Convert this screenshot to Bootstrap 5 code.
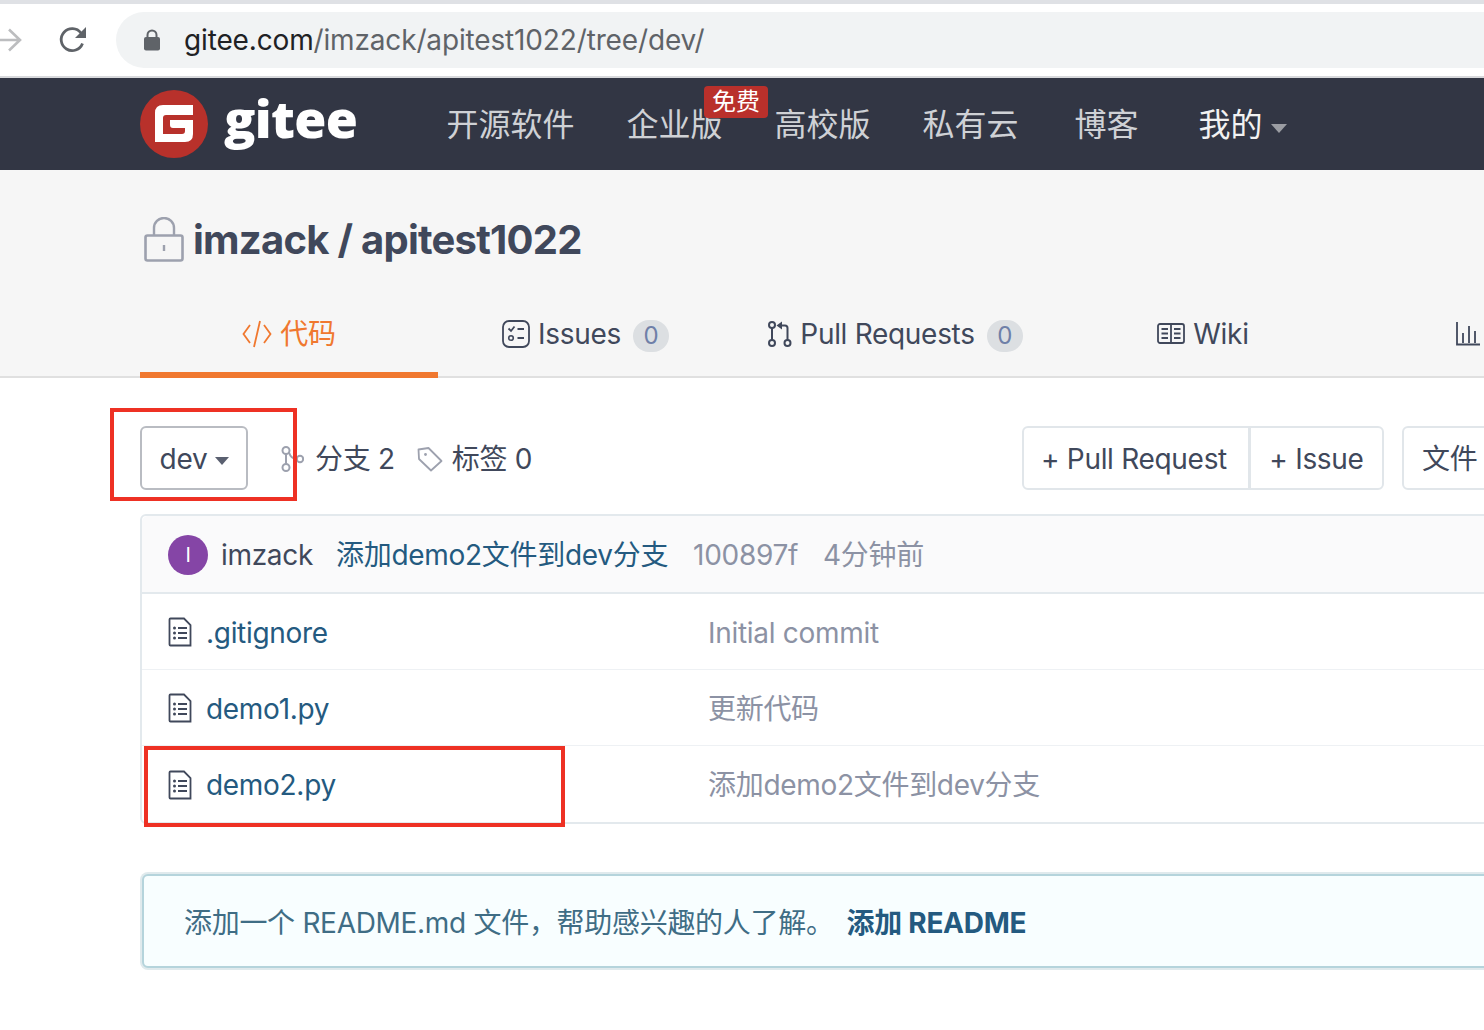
<!DOCTYPE html>
<html lang="zh-CN">
<head>
    <meta charset="UTF-8">
    <meta name="viewport" content="width=device-width, initial-scale=1.0">
    <title>imzack/apitest1022 - Gitee</title>
    <link href="https://cdn.jsdelivr.net/npm/bootstrap@5.3.0/dist/css/bootstrap.min.css" rel="stylesheet">
    <style>
        body {
            font-family: Inter, "Noto Sans CJK SC", sans-serif;
            font-size: 28px;
            letter-spacing: -0.3px;
            color: #40485b;
            background: #fff;
        }
        .shot { width: 1484px; height: 1030px; overflow: hidden; position: relative; }

        /* browser bar */
        .chrome-bar { height: 78px; border-top: 4px solid #dfe1e5; border-bottom: 2px solid #d8d9dc; background: #fff; }
        .chrome-arrow { flex: 0 0 22px; }
        .chrome-reload { flex: 0 0 28px; margin-left: 37px; }
        .url-pill { margin-left: 29px; flex: 0 0 1400px; height: 56px; background: #f1f3f4; border-radius: 28px 0 0 28px; padding-left: 28px; }
        .url-text { margin-left: 24px; font-size: 28px; letter-spacing: -0.15px; color: #5f6368; white-space: nowrap; }
        .url-text b { font-weight: 400; color: #202124; }

        /* gitee nav */
        .git-nav { height: 92px; background: #323644; padding: 0 0 0 140px; justify-content: flex-start; flex-wrap: nowrap; }
        .git-brand { flex: 0 0 280.5px; padding: 0; margin: 0; gap: 16px; }
        .git-word { font-family: "Open Sans", sans-serif; font-weight: 800; font-size: 52px; line-height: 68px; color: #fff; letter-spacing: -0.7px; margin-top: -13px; }
        .git-nav .nav-link { font-size: 32px; line-height: 40px; letter-spacing: 0; color: #cfd1d5; padding: 0 26px; margin-top: 2px; white-space: nowrap; }
        .git-nav .nav-link.blog-link { padding-left: 30px; }
        .git-nav .nav-link.me-link { color: #f2f2f2; padding-left: 34px; }
        .nav-caret { display: inline-block; width: 0; height: 0; border: 8px solid transparent; border-top: 9px solid #9b9da3; border-bottom: 0; margin-left: 8px; vertical-align: 3px; }
        .free-tag { position: absolute; left: 704px; top: 86px; width: 64px; height: 32px; background: #b9302b; color: #fff; font-size: 24px; line-height: 32px; letter-spacing: 0; text-align: center; border-radius: 4px; }

        /* repo header */
        .repo-head { background: #f6f6f6; height: 208px; border-bottom: 2px solid #e0e0e0; padding: 46px 0 0 140px; }
        .repo-title { height: 48px; margin: 0 0 26px; font-size: 40px; font-weight: 700; line-height: 48px; letter-spacing: -0.75px; color: #40485b; gap: 9px; }
        .repo-tabs { height: 88px; flex-wrap: nowrap; }
        .repo-tab { height: 88px; padding-top: 6px; border-bottom: 6px solid transparent; color: #40485b; gap: 8px; flex: 0 0 auto; white-space: nowrap; }
        .repo-tab.on { color: #f0782f; border-bottom-color: #f0782f; }
        .tab-a { width: 298px; }
        .tab-b { width: 295px; }
        .tab-c { width: 325px; }
        .tab-d { width: 290px; }
        .tab-e { width: 240px; justify-content: center; }
        .count-pill { width: 36px; height: 32px; line-height: 32px; margin: 4px 0 0 4px; padding: 0; border-radius: 16px; background: #dcdfe2; color: #6f80a8; font-size: 24px; font-weight: 400; }

        /* tool row */
        .repo-main { margin-left: 140px; width: 1500px; }
        .tool-row { height: 64px; margin: 48px 0 24px; }
        .git-btn { height: 64px; font-size: 28px; line-height: 58px; letter-spacing: -0.3px; padding: 2px 20px 0; border: 2px solid #e1e6ea; border-radius: 6px; color: #40485b; background: #fff; white-space: nowrap; }
        .git-btn:hover { color: #40485b; background: #fff; border-color: #e1e6ea; }
        .branch-btn { width: 108px; border-color: #b9bcc2; padding: 2px 0 0 1px; }
        .branch-btn:hover { border-color: #b9bcc2; }
        .btn-caret { display: inline-block; width: 0; height: 0; border: 7px solid transparent; border-top: 8px solid #5a6070; border-bottom: 0; margin-left: 8px; vertical-align: 4px; }
        .meta-link { color: #40485b; white-space: nowrap; padding-top: 2px; }
        .meta-branch { margin-left: 32px; gap: 11px; }
        .meta-tag { margin-left: 22px; gap: 9px; }
        .tool-right { margin-right: 118px; }
        .pr-btn { width: 228px; padding: 2px 4px 0 0; }
        .issue-btn { width: 135px; padding: 2px 0 0; }
        .file-btn { margin-left: 18px; width: 120px; padding: 2px 0 0 18px; text-align: left; }

        /* file table */
        .file-card { border: 2px solid #e3e9ed; border-radius: 6px; font-size: 28px; }
        .file-card > .list-group { border-top: 0; border-bottom: 0; }
        .commit-head { height: 78px; background: #fafafb; border-bottom: 2px solid #e3e9ed; padding: 2px 0 0 26px; border-radius: 6px 6px 0 0; }
        .user-dot { width: 40px; height: 40px; border-radius: 50%; background: #8545a6; color: #fff; font-size: 20px; line-height: 40px; text-align: center; }
        .commit-user { margin-left: 13px; color: #40485b; }
        .commit-msg { margin-left: 23px; color: #245a80; text-decoration: none; }
        .commit-faint { margin-left: 25px; color: #8c92a4; }
        .file-row { height: 76px; padding: 1px 0 0 26px; border-color: #eef1f4; border-width: 0 0 2px; }
        .file-row:last-child { border-bottom-width: 0; height: 76px; }
        .file-name { width: 502px; margin-left: 14px; padding-top: 1px; color: #245a80; text-decoration: none; }
        .file-note { padding-top: 1px; color: #8c92a4; }

        /* readme tip */
        .readme-tip { margin: 50px 0 0 2px; height: 94px; padding: 4px 0 0 40px; background: #f8feff; border: 2px solid #b5d4dc; border-radius: 6px; box-shadow: 0 0 0 2px #e0eaed; color: #3f6d85; font-size: 28px; }
        .readme-tip a { color: #245a80; font-weight: 700; text-decoration: none; margin-left: 13px; }

        /* red annotation frames */
        .mark-box { position: absolute; border: 4px solid #ee3124; pointer-events: none; }
        .mark-a { left: 110px; top: 408px; width: 187px; height: 93px; }
        .mark-b { left: 144px; top: 746px; width: 421px; height: 81px; }
    </style>
</head>
<body>
<div class="shot">

    <!-- browser bar -->
    <div class="chrome-bar d-flex align-items-center">
        <svg class="chrome-arrow" viewBox="0 0 22 26" height="26"><path d="M0 13H20M9 2.5 20 13 9 23.5" fill="none" stroke="#bcbdbf" stroke-width="2.6"/></svg>
        <svg class="chrome-reload" viewBox="0 0 28 28" height="28"><path d="M23.5 17.5A11 11 0 1 1 22 7" fill="none" stroke="#5f6368" stroke-width="2.8"/><path d="M27 1V12H16Z" fill="#5f6368"/></svg>
        <div class="url-pill d-flex align-items-center">
            <svg width="16" height="22" viewBox="0 0 16 22"><path d="M3.5 9V6a4.5 4.5 0 0 1 9 0v3" fill="none" stroke="#5f6368" stroke-width="2"/><rect y="8" width="16" height="13.5" rx="2" fill="#5f6368"/></svg>
            <div class="url-text"><b>gitee.com</b>/imzack/apitest1022/tree/dev/</div>
        </div>
    </div>

    <!-- site nav -->
    <nav class="navbar git-nav">
        <a class="navbar-brand git-brand d-flex align-items-center" href="#">
            <svg width="68" height="68" viewBox="0 0 68 68"><circle cx="34" cy="34" r="34" fill="#b8312b"/><path d="M23 15H53V25H26Q23 25 23 28V44H42Q45 44 45 41V38H33Q30 38 30 35V30H53V44Q53 52 45 52H15V23Q15 15 23 15Z" fill="#fff"/></svg>
            <span class="git-word">gitee</span>
        </a>
        <ul class="nav flex-nowrap">
            <li class="nav-item"><a class="nav-link" href="#">开源软件</a></li>
            <li class="nav-item"><a class="nav-link" href="#">企业版</a></li>
            <li class="nav-item"><a class="nav-link" href="#">高校版</a></li>
            <li class="nav-item"><a class="nav-link" href="#">私有云</a></li>
            <li class="nav-item"><a class="nav-link blog-link" href="#">博客</a></li>
            <li class="nav-item"><a class="nav-link me-link" href="#">我的<span class="nav-caret"></span></a></li>
        </ul>
    </nav>
    <span class="free-tag">免费</span>

    <!-- repo header -->
    <div class="repo-head">
        <h1 class="repo-title d-flex align-items-center">
            <svg class="ms-1" width="40" height="46" viewBox="0 0 40 46"><path d="M10 19V11a10 10 0 0 1 20 0v8" fill="none" stroke="#9da1ae" stroke-width="2.4"/><rect x="1.5" y="18.5" width="37" height="25" rx="2" fill="none" stroke="#9da1ae" stroke-width="2.6"/><path d="M20 28v6" stroke="#9da1ae" stroke-width="2.4"/></svg>
            <span>imzack / apitest1022</span>
        </h1>
        <div class="repo-tabs d-flex">
            <a class="repo-tab tab-a on d-flex align-items-center justify-content-center text-decoration-none" href="#">
                <svg width="30" height="28" viewBox="0 0 30 28"><path d="M8 5 1.5 14 8 23M22 5 28.500 14 22 23M18 1 12 27" fill="none" stroke="#f0782f" stroke-width="1.800"/></svg>
                <span>代码</span>
            </a>
            <a class="repo-tab tab-b d-flex align-items-center justify-content-center text-decoration-none" href="#">
                <svg width="28" height="28" viewBox="0 0 28 28"><rect x="1" y="1" width="26" height="26" rx="6" fill="none" stroke="#40485b" stroke-width="1.800"/><path d="M6.500 8.500 9 11 12.500 6.500M15.500 9H22M15.500 18H22" fill="none" stroke="#40485b" stroke-width="1.800"/><circle cx="9" cy="18" r="2.300" fill="none" stroke="#40485b" stroke-width="1.600"/></svg>
                <span>Issues</span>
                <span class="badge count-pill">0</span>
            </a>
            <a class="repo-tab tab-c d-flex align-items-center justify-content-center text-decoration-none" href="#">
                <svg width="24" height="26" viewBox="0 0 24 26"><g fill="none" stroke="#40485b" stroke-width="2"><circle cx="4" cy="4" r="3"/><circle cx="4" cy="22" r="3"/><circle cx="19.500" cy="22" r="3"/><path d="M4 7V19M19.500 19V7Q19.500 4.500 17 4.500H12"/></g><path d="M14 .5V8.500L8.500 4.500Z" fill="#40485b"/></svg>
                <span>Pull Requests</span>
                <span class="badge count-pill">0</span>
            </a>
            <a class="repo-tab tab-d d-flex align-items-center justify-content-center text-decoration-none" href="#">
                <svg width="28" height="22" viewBox="0 0 28 22"><g fill="none" stroke="#40485b" stroke-width="1.800"><rect x="1" y="1" width="26" height="19" rx="2"/><path d="M14 1V20M4.500 6H11M4.500 10.500H11M4.500 15H11M17 6H23.500M17 10.500H23.500M17 15H23.500"/></g></svg>
                <span>Wiki</span>
            </a>
            <a class="repo-tab tab-e d-flex align-items-center text-decoration-none" href="#">
                <svg width="24" height="24" viewBox="0 0 24 24"><path d="M1 0V22.500H24M7 21V11M13 21V4M19 21V9" fill="none" stroke="#40485b" stroke-width="1.800"/></svg>
            </a>
        </div>
    </div>

    <div class="repo-main">
        <!-- branch row -->
        <div class="tool-row d-flex align-items-center">
            <button type="button" class="btn git-btn branch-btn">dev<span class="btn-caret"></span></button>
            <a class="meta-link meta-branch d-flex align-items-center text-decoration-none" href="#">
                <svg width="24" height="26" viewBox="0 0 24 26"><g fill="none" stroke="#9da1ae" stroke-width="2"><circle cx="6" cy="4.500" r="3.500"/><circle cx="6" cy="21.500" r="3.500"/><circle cx="20" cy="13" r="3.200"/><path d="M6 8V18M9 6.500Q11 13 16.800 13"/></g></svg>
                <span>分支 2</span>
            </a>
            <a class="meta-link meta-tag d-flex align-items-center text-decoration-none" href="#">
                <svg width="26" height="26" viewBox="0 0 26 26"><path d="M1.500 3.500 11.500 2 24.500 15 14 24.500 2 13Z" fill="none" stroke="#9da1ae" stroke-width="1.800" stroke-linejoin="round"/><circle cx="8.500" cy="8.500" r="1.400" fill="#9da1ae"/></svg>
                <span>标签 0</span>
            </a>
            <div class="ms-auto d-flex tool-right">
                <div class="btn-group">
                    <button type="button" class="btn git-btn pr-btn">+ Pull Request</button>
                    <button type="button" class="btn git-btn issue-btn">+ Issue</button>
                </div>
                <button type="button" class="btn git-btn file-btn">文件</button>
            </div>
        </div>

        <!-- file table -->
        <div class="card file-card">
            <div class="commit-head d-flex align-items-center">
                <span class="user-dot">I</span>
                <span class="commit-user">imzack</span>
                <a class="commit-msg" href="#">添加demo2文件到dev分支</a>
                <span class="commit-faint">100897f</span>
                <span class="commit-faint">4分钟前</span>
            </div>
            <div class="list-group list-group-flush">
                <div class="list-group-item file-row d-flex align-items-center">
                    <svg width="24" height="30" viewBox="0 0 24 30"><g fill="none" stroke="#40485b" stroke-width="1.800"><path d="M2.500 1.500H16L22.500 8V28.500H2.500Q1.500 28.500 1.500 27.500V2.500Q1.500 1.500 2.500 1.500Z"/><path d="M10 11H19M10 16H19M10 21H19"/></g><g fill="#40485b"><circle cx="6.500" cy="11" r="1.500"/><circle cx="6.500" cy="16" r="1.500"/><circle cx="6.500" cy="21" r="1.500"/></g></svg>
                    <a class="file-name" href="#">.gitignore</a>
                    <span class="file-note">Initial commit</span>
                </div>
                <div class="list-group-item file-row d-flex align-items-center">
                    <svg width="24" height="30" viewBox="0 0 24 30"><g fill="none" stroke="#40485b" stroke-width="1.800"><path d="M2.500 1.500H16L22.500 8V28.500H2.500Q1.500 28.500 1.500 27.500V2.500Q1.500 1.500 2.500 1.500Z"/><path d="M10 11H19M10 16H19M10 21H19"/></g><g fill="#40485b"><circle cx="6.500" cy="11" r="1.500"/><circle cx="6.500" cy="16" r="1.500"/><circle cx="6.500" cy="21" r="1.500"/></g></svg>
                    <a class="file-name" href="#">demo1.py</a>
                    <span class="file-note">更新代码</span>
                </div>
                <div class="list-group-item file-row d-flex align-items-center">
                    <svg width="24" height="30" viewBox="0 0 24 30"><g fill="none" stroke="#40485b" stroke-width="1.800"><path d="M2.500 1.500H16L22.500 8V28.500H2.500Q1.500 28.500 1.500 27.500V2.500Q1.500 1.500 2.500 1.500Z"/><path d="M10 11H19M10 16H19M10 21H19"/></g><g fill="#40485b"><circle cx="6.500" cy="11" r="1.500"/><circle cx="6.500" cy="16" r="1.500"/><circle cx="6.500" cy="21" r="1.500"/></g></svg>
                    <a class="file-name" href="#">demo2.py</a>
                    <span class="file-note">添加demo2文件到dev分支</span>
                </div>
            </div>
        </div>

        <!-- readme tip -->
        <div class="readme-tip d-flex align-items-center">
            <span>添加一个 README.md 文件，帮助感兴趣的人了解。</span>
            <a href="#">添加 README</a>
        </div>
    </div>

    <div class="mark-box mark-a"></div>
    <div class="mark-box mark-b"></div>
</div>
<script src="https://cdn.jsdelivr.net/npm/bootstrap@5.3.0/dist/js/bootstrap.bundle.min.js"></script>
</body>
</html>
